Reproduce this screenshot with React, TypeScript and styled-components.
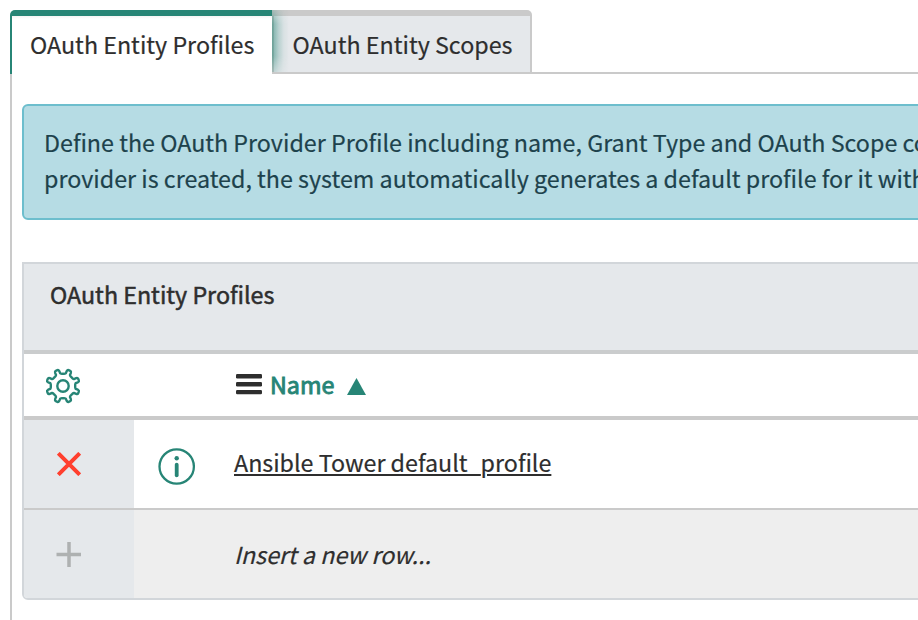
import React from "react";
import styled, { createGlobalStyle } from "styled-components";

const GlobalStyle = createGlobalStyle`
  * { box-sizing: border-box; }
  html, body { margin: 0; background: #fff; overflow: hidden; }
  body {
    font-family: "Noto Sans CJK SC", "Open Sans", sans-serif;
    font-size: 23.28px;
    line-height: 36px;
    color: #2e2e2e;
    -webkit-text-stroke: 0.2px currentColor;
  }
`;

const Page = styled.main`
  width: 918px;
  height: 620px;
  padding: 10px 0 0 10px;
  overflow: hidden;
  display: flex;
  flex-direction: column;
`;

const TabStrip = styled.div`
  display: flex;
  height: 64px;
  flex: none;
`;

const Tab = styled.button<{ $active?: boolean }>`
  position: relative;
  height: 64px;
  width: ${(p) => (p.$active ? 262 : 260)}px;
  padding: 0 0 ${(p) => (p.$active ? 2 : 0)}px ${(p) => (p.$active ? 18 : 20.6)}px;
  flex: none;
  border: 0 solid ${(p) => (p.$active ? "#278576" : "#cacaca")};
  border-top-width: 6px;
  border-left-width: ${(p) => (p.$active ? 2 : 0)}px;
  border-right-width: ${(p) => (p.$active ? 0 : 2)}px;
  border-bottom-width: ${(p) => (p.$active ? 0 : 2)}px;
  border-radius: ${(p) => (p.$active ? "5px 0 0 0" : "0 5px 0 0")};
  background: ${(p) =>
    p.$active
      ? "linear-gradient(#f4f4f4, #fff 3px)"
      : "linear-gradient(#cacaca, #cacaca) left / 2px 100% no-repeat, #e5e8eb"};
  font: inherit;
  color: inherit;
  text-align: left;
  white-space: nowrap;

  &::before {
    content: "";
    display: ${(p) => (p.$active ? "none" : "block")};
    position: absolute;
    inset: -6px auto 0 0;
    width: 17px;
    background: linear-gradient(90deg, rgba(39, 133, 118, 0.58), rgba(39, 133, 118, 0.42) 3px, rgba(39, 133, 118, 0.22) 7px, rgba(39, 133, 118, 0.06) 12px, transparent);
    mask-image: linear-gradient(rgba(0, 0, 0, 0.4), #000 14px, #000 46px, rgba(0, 0, 0, 0.4));
  }
`;

const TabRule = styled.div`
  flex: 1;
  border-bottom: 2px solid #cacaca;
`;

const Panel = styled.section`
  flex: 1;
  border-left: 2px solid #cacaca;
  padding: 30px 0 0 10px;
`;

const Notice = styled.div`
  height: 116px;
  width: 1000px;
  padding: 18px 20px;
  border: 2px solid #6dbecd;
  border-radius: 6px;
  background: #b6dce4;
  color: #1d424c;
  white-space: nowrap;
`;

const List = styled.div`
  width: 1000px;
  height: 338px;
  margin-top: 42px;
  border: 2px solid #d2d6da;
  border-radius: 0 0 6px 6px;
  overflow: hidden;
`;

const ListTitle = styled.div`
  height: 90px;
  padding: 12px 0 0 26px;
  border-bottom: 4px solid #cacccd;
  background: #e5e8eb;
  -webkit-text-stroke: 0.5px #2e2e2e;
`;

const Row = styled.div<{ $height: number; $rule: number; $muted?: boolean }>`
  display: grid;
  grid-template-columns: 110px 100px 1fr;
  height: ${(p) => p.$height}px;
  border-bottom: ${(p) => p.$rule}px solid #cacaca;
  background: ${(p) => (p.$muted ? "#eeeeee" : "#fff")};
`;

const IconCell = styled.div<{ $shaded?: boolean; $left: number; $top: number }>`
  padding: ${(p) => p.$top}px 0 0 ${(p) => p.$left}px;
  background: ${(p) => (p.$shaded ? "#e5e8eb" : "transparent")};
  line-height: 0;
`;

const HeaderCell = styled.div`
  display: flex;
  align-items: flex-start;
  gap: 8px;
  padding: 12px 0 0 2px;
`;

const MenuIcon = styled.svg`
  margin-top: 8px;
`;

const SortIcon = styled.svg`
  margin: 12px 0 0 5px;
`;

const ColumnName = styled.span`
  color: #278576;
  -webkit-text-stroke: 0.9px #278576;
`;

const TextCell = styled.div<{ $top: number }>`
  padding-top: ${(p) => p.$top}px;
`;

const RecordLink = styled.a`
  color: inherit;
`;

const Underlined = styled.span<{ $solid?: boolean }>`
  text-decoration: underline;
  text-decoration-thickness: 2px;
  text-underline-offset: 2px;
  text-decoration-skip-ink: ${(p) => (p.$solid ? "none" : "auto")};
`;

const Hint = styled.em`
  font-style: italic;
`;

const gearPath = (() => {
  const at = (r: number, deg: number) => {
    const a = ((deg - 90) * Math.PI) / 180;
    return `${(18 + r * Math.cos(a)).toFixed(2)} ${(18 + r * Math.sin(a)).toFixed(2)}`;
  };
  let d = "";
  for (let i = 0; i < 8; i++) {
    const c = 22.5 + i * 45;
    d += `${i ? "L" : "M"}${at(13, c - 10)} L${at(15.3, c - 8.5)} Q${at(16.9, c - 7)} ${at(16.8, c - 3)} L${at(16.8, c + 3)} Q${at(16.9, c + 7)} ${at(15.3, c + 8.5)} L${at(13, c + 10)} Q${at(12.2, c + 14)} ${at(12.2, c + 19)} L${at(12.2, c + 26)} Q${at(12.2, c + 31)} ${at(13, c + 35)} `;
  }
  return d + "Z";
})();

export default function App() {
  return (
    <>
      <GlobalStyle />
      <Page>
        <TabStrip>
          <Tab $active>OAuth Entity Profiles</Tab>
          <Tab>OAuth Entity Scopes</Tab>
          <TabRule />
        </TabStrip>
        <Panel>
          <Notice>
            Define the OAuth Provider Profile including name, Grant Type and OAuth Scope configuration.
            <br />
            provider is created, the system automatically generates a default profile for it with
          </Notice>
          <List>
            <ListTitle>OAuth Entity Profiles</ListTitle>
            <Row $height={66} $rule={4}>
              <IconCell $left={21} $top={14}>
                <svg width="36" height="36" fill="none" stroke="#278576" strokeWidth="2.4" strokeLinejoin="round">
                  <path d={gearPath} />
                  <circle cx="18" cy="18" r="5.7" />
                </svg>
              </IconCell>
              <div />
              <HeaderCell>
                <MenuIcon width="26" height="21" fill="#2e2e2e">
                  <rect y="0" width="26" height="4.4" rx="1.2" />
                  <rect y="8" width="26" height="4.4" rx="1.2" />
                  <rect y="16" width="26" height="4.2" rx="1.2" />
                </MenuIcon>
                <ColumnName>Name</ColumnName>
                <SortIcon width="20" height="17" fill="#278576">
                  <path d="M9.5 0L19 17H0Z" />
                </SortIcon>
              </HeaderCell>
            </Row>
            <Row $height={90} $rule={2}>
              <IconCell $shaded $left={33} $top={32}>
                <svg width="24" height="24" stroke="#ff402f" strokeWidth="4">
                  <path d="M1.3 1.3L22.7 22.7M22.7 1.3L1.3 22.7" />
                </svg>
              </IconCell>
              <IconCell $left={24} $top={28}>
                <svg width="38" height="38" fill="none" stroke="#278576">
                  <circle cx="18.7" cy="18.5" r="17.2" strokeWidth="2.3" />
                  <circle cx="18.7" cy="10.2" r="2.2" fill="#278576" stroke="none" />
                  <path d="M18.7 16.7V27.3" strokeWidth="3.8" strokeLinecap="round" />
                </svg>
              </IconCell>
              <TextCell $top={24}>
                <RecordLink>
                  <Underlined $solid>Ansible Tower default_</Underlined>
                  <Underlined>profile</Underlined>
                </RecordLink>
              </TextCell>
            </Row>
            <Row $height={88} $rule={0} $muted>
              <IconCell $shaded $left={32} $top={32}>
                <svg width="26" height="26" stroke="#aeb1b1" strokeWidth="3.5">
                  <path d="M13 0V25M0.5 12.4H25" />
                </svg>
              </IconCell>
              <div />
              <TextCell $top={26}>
                <Hint>Insert a new row...</Hint>
              </TextCell>
            </Row>
          </List>
        </Panel>
      </Page>
    </>
  );
}
